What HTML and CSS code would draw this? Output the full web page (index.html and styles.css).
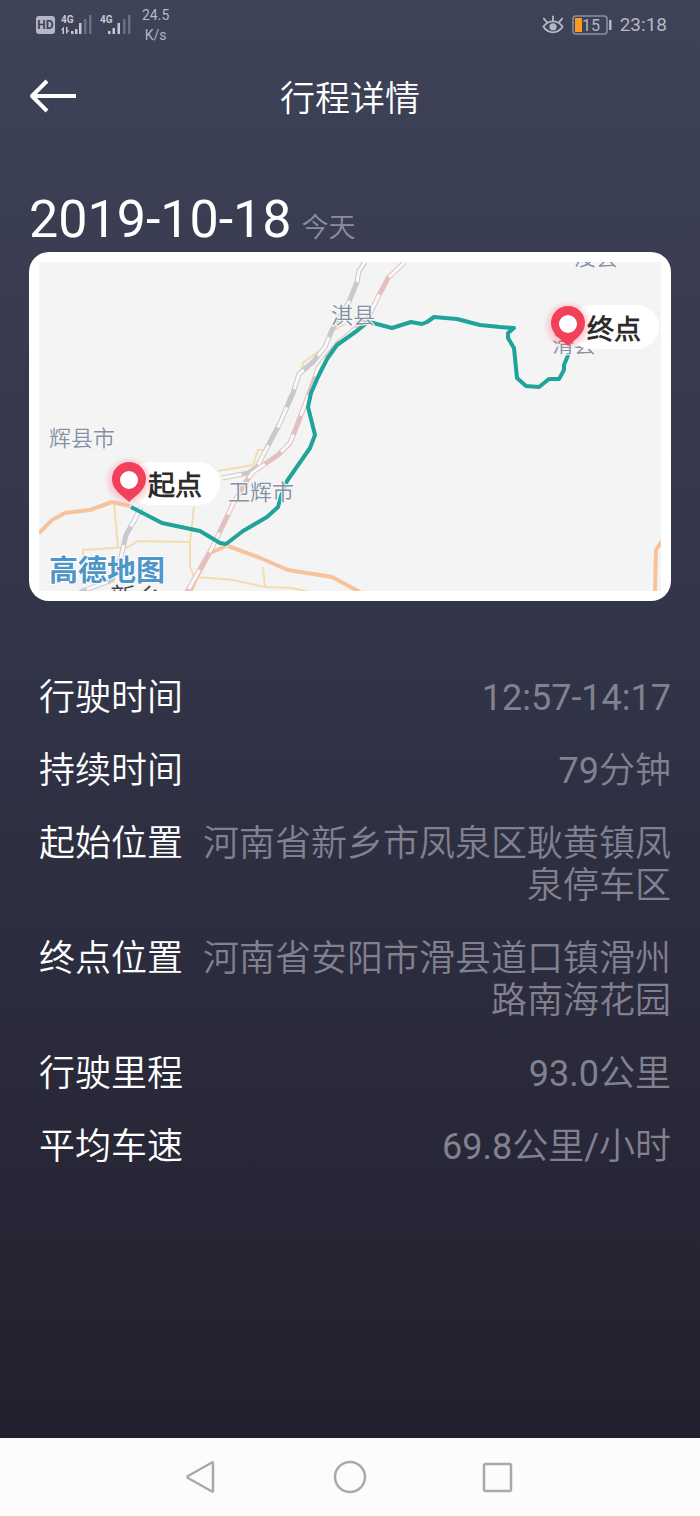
FILE: index.html
```html
<!DOCTYPE html>
<html lang="zh-CN">
<head>
<meta charset="utf-8">
<meta name="viewport" content="width=device-width, initial-scale=1">
<title>行程详情</title>
<link rel="stylesheet" href="styles.css">
</head>
<body>
<div class="screen">
  <div class="status">
    <div class="status-group">
      <svg class="signals" width="98" height="24" viewBox="0 0 98 24" aria-hidden="true">
        <rect x="0" y="3" width="19" height="18" rx="3" fill="#b4b7c4"/>
        <text x="9.500" y="16" class="hd">HD</text>
        <text x="25" y="10" class="net">4G</text>
        <g fill="#c5c8d3">
          <path d="M25 17l3-3.500V21h-1.500v-4zM33.500 17.500L30 21v-7h1.500v3.500z"/>
          <rect x="35" y="18" width="2.500" height="3"/>
          <rect x="39" y="16" width="2.500" height="5"/>
          <rect x="43" y="10" width="2.500" height="11"/>
          <rect x="72" y="18" width="2.500" height="3"/>
          <rect x="76.500" y="15" width="2.500" height="6"/>
          <rect x="81.500" y="10" width="2.500" height="11"/>
        </g>
        <g fill="#6b6e7f">
          <rect x="48" y="6" width="2.500" height="15"/>
          <rect x="53" y="2" width="2.500" height="19"/>
          <rect x="87" y="6" width="2.500" height="15"/>
          <rect x="92" y="2" width="2.500" height="19"/>
        </g>
        <text x="64" y="10" class="net">4G</text>
      </svg>
      <div class="speed"><span>24.5</span><span>K/s</span></div>
    </div>
    <div class="status-group">
      <svg width="22" height="22" viewBox="0 0 24 22" fill="none" stroke="#b4b7c4" stroke-width="2" stroke-linecap="round" aria-hidden="true">
        <path d="M1.500 13C7 5 17 5 22.500 13C17 21 7 21 1.500 13ZM2 4l3 3.500M12 1.500v5M22 4l-3 3.500"/>
        <circle cx="12" cy="13" r="4" fill="#b4b7c4" stroke="none"/>
      </svg>
      <svg class="battery" width="40" height="20" viewBox="0 0 40 20" role="img" aria-label="15%">
        <rect x="1" y="1" width="34" height="18" rx="3" fill="none" stroke="#8d90a0" stroke-width="1.500"/>
        <rect x="3" y="3" width="7" height="14" fill="#ff9a1f"/>
        <rect x="37" y="5" width="2.500" height="10" fill="#b4b7c4"/>
        <text x="19" y="16" class="charge">15</text>
      </svg>
      <span class="clock">23:18</span>
    </div>
  </div>

  <header class="bar">
    <button class="back" type="button" aria-label="返回">
      <svg width="48" height="34" viewBox="0 0 48 34" fill="none" stroke="#fff" stroke-width="4" stroke-linejoin="round" aria-hidden="true">
        <path d="M18 2L3 17L18 32M3 17H47"/>
      </svg>
    </button>
    <h1 class="title">行程详情</h1>
  </header>

  <main class="content">
    <div class="date"><span class="day">2019-10-18</span><span class="today">今天</span></div>

    <div class="map-card">
      <svg class="map" viewBox="39 262 622 329" role="img" aria-label="行程路线">
        <defs>
          <radialGradient id="glow"><stop offset="0.500" stop-color="#ff3b5c" stop-opacity="0.350"/><stop offset="1" stop-color="#ff3b5c" stop-opacity="0"/></radialGradient>
          <g id="pin">
            <circle r="25" fill="url(#glow)"/>
            <path d="M0 21C-6 15-17 9-17-2A17 17 0 0 1 17-2C17 9 6 15 0 21Z" fill="#f0405a"/>
            <circle cy="-1" r="9" fill="#fff"/>
          </g>
        </defs>
        <rect x="39" y="262" width="622" height="329" fill="#f4f4f4"/>
        <g class="minor">
          <path d="M114 503L118 548M83 562V550L128 547L138 541L190 542M194 507L190 542V566L194 577L210 578L233 580L265 587L292 588L310 592M263 567L265 587"/>
          <path d="M218 471L253 465L258 450H264M325 347L304 362L299 374L286 408L289 396M331 332L345 324"/>
        </g>
        <g class="major">
          <path d="M39 533L52 520L65 513L90 510L112 502L130 506M226 546L210 553L197 577L190 592M228 546L258 557L288 570L332 577L360 592M662 541L656 550L655 592"/>
        </g>
        <g>
          <path class="rail" d="M365 262L359 271L357 282L349 302L332 330L325 347L313 362L299 374L293 393L280 423L257 467L248 473L222 478"/>
          <path class="rail" d="M141 507L134 521L126 535L121 557L112 580L80 592"/>
          <path class="rail red" d="M405 262L388 278L378 297L368 318L337 344L318 368L313 383L298 423L290 443L278 455L253 472L245 483L233 504L212 548L187 592"/>
          <path class="sleeper" d="M365 262L359 271L357 282L349 302L332 330L325 347L313 362L299 374L293 393L280 423L257 467L248 473L222 478"/>
          <path class="sleeper" d="M141 507L134 521L126 535L121 557L112 580L80 592"/>
          <path class="sleeper" d="M405 262L388 278L378 297L368 318L337 344L318 368L313 383L298 423L290 443L278 455L253 472L245 483L233 504L212 548L187 592"/>
        </g>
        <path class="route" d="M131 507L162 523L200 531L220 543L226 544L243 531L267 517L278 507L281 496L287 481L310 448L315 435L308 407L311 393L318 377L327 359L337 345L358 330L368 322L373 323L392 328L411 322L422 324L427 322L434 317L457 319L480 325L500 327L514 328L508 333V338L514 348L517 378L526 386L539 387L549 379L559 379L564 370V365L569 353"/>
        <g class="place">
          <text x="331" y="323">淇县</text>
          <text x="49" y="446">辉县市</text>
          <text x="228" y="500">卫辉市</text>
          <text x="552" y="352">滑县</text>
          <text x="574" y="265">浚县</text>
        </g>
        <text class="city" x="110" y="607">新乡</text>
        <text class="brand" x="49" y="581">高德地图</text>
        <rect x="129" y="462" width="91" height="43" rx="21" fill="#fff"/>
        <use href="#pin" x="129" y="481"/>
        <text class="tag" x="148" y="495">起点</text>
        <rect x="568" y="305" width="91" height="44" rx="22" fill="#fff"/>
        <use href="#pin" x="568" y="325"/>
        <text class="tag" x="587" y="339">终点</text>
      </svg>
    </div>

    <dl class="details">
      <div class="row"><dt>行驶时间</dt><dd>12:57-14:17</dd></div>
      <div class="row"><dt>持续时间</dt><dd>79分钟</dd></div>
      <div class="row"><dt>起始位置</dt><dd>河南省新乡市凤泉区耿黄镇凤泉停车区</dd></div>
      <div class="row"><dt>终点位置</dt><dd>河南省安阳市滑县道口镇滑州路南海花园</dd></div>
      <div class="row"><dt>行驶里程</dt><dd>93.0公里</dd></div>
      <div class="row"><dt>平均车速</dt><dd>69.8公里/小时</dd></div>
    </dl>
  </main>

  <nav class="keys">
    <button type="button" aria-label="返回"><svg width="34" height="34" viewBox="0 0 34 34"><path d="M28 3V31Q28 32 27 31.500L3 18Q2 17 3 16L27 2.500Q28 2 28 3Z"/></svg></button>
    <button type="button" aria-label="主页"><svg width="34" height="34" viewBox="0 0 34 34"><circle cx="17" cy="17" r="15"/></svg></button>
    <button type="button" aria-label="最近任务"><svg width="34" height="34" viewBox="0 0 34 34"><rect x="3" y="4" width="27" height="27" rx="1.500"/></svg></button>
  </nav>
</div>
</body>
</html>
```

FILE: styles.css
```css
* { box-sizing: border-box; }

body {
  margin: 0;
  font-family: Roboto, "Noto Sans CJK SC DemiLight", "Noto Sans CJK SC", sans-serif;
  color: #fff;
}

button {
  border: 0;
  padding: 0;
  background: none;
  display: flex;
  align-items: center;
  justify-content: center;
}

.screen {
  min-height: 100vh;
  display: flex;
  flex-direction: column;
  background: linear-gradient(#3f4357, #303245 48%, #22202e 95%);
}

.status {
  height: 50px;
  padding: 0 33px 0 36px;
  display: flex;
  align-items: center;
  justify-content: space-between;
  color: #b4b7c4;
}

.status-group {
  display: flex;
  align-items: center;
  gap: 8px;
}

.speed {
  display: flex;
  flex-direction: column;
  align-items: center;
  font-size: 14px;
  line-height: 20px;
}

.hd { font-size: 12px; font-weight: 700; text-anchor: middle; fill: #3e4256; }
.net { font-size: 10px; font-weight: 700; fill: #c5c8d3; }
.charge { font-size: 16px; text-anchor: middle; fill: #b4b7c4; }
.clock { font-size: 19px; line-height: 24px; }

.bar {
  height: 92px;
  padding: 0 29px;
  display: grid;
  grid-template-columns: 48px 1fr 48px;
  align-items: center;
}

.title {
  margin: 0;
  padding-top: 8px;
  font-size: 35px;
  line-height: 42px;
  font-weight: 400;
  text-align: center;
}

.content {
  flex: 1;
  padding: 54px 29px 0;
}

.date {
  display: flex;
  align-items: baseline;
  gap: 10px;
  line-height: 48px;
}

.day { font-size: 52px; }
.today { font-size: 27px; color: #8b8d9c; }

.map-card {
  padding: 10px;
  border-radius: 20px;
  background: #fff;
}

.map { display: block; width: 100%; height: auto; }
.map path { fill: none; }
.map #pin path { fill: #f0405a; }
.minor { stroke: #f3ddb0; stroke-width: 2; }
.major { stroke: #f7c39c; stroke-width: 4; stroke-linejoin: round; }
.rail { stroke: #c9c9cd; stroke-width: 5; }
.red { stroke: #e2c0c0; }
.sleeper { stroke: #fbf8f8; stroke-width: 3; stroke-dasharray: 22 20; }
.route { stroke: #20a39b; stroke-width: 4; stroke-linejoin: round; }
.place { font-size: 22px; fill: #8292a3; stroke: #f7f7f7; stroke-width: 2; paint-order: stroke; }
.city { font-size: 26px; fill: #444; }
.brand { font-family: "Noto Sans CJK SC", sans-serif; font-size: 29px; font-weight: 700; fill: #4f96c8; stroke: #fff; stroke-width: 2; paint-order: stroke; }
.tag { font-size: 27px; font-weight: 700; fill: #2b2b2b; }

.details {
  margin: 0;
  padding: 76px 0 40px 10px;
  display: flex;
  flex-direction: column;
  gap: 31px;
  font-size: 36px;
  line-height: 42px;
}

.row {
  display: flex;
  justify-content: space-between;
  gap: 18px;
}

.row dt { flex: none; }
.row dd { margin: 0; text-align: right; color: #818190; }

.keys {
  height: 78px;
  display: flex;
  justify-content: center;
  background: #fcfcfc;
}

.keys button { width: 148px; }
.keys svg { fill: none; stroke: #a9a9a9; stroke-width: 2.500; stroke-linejoin: round; }
```
